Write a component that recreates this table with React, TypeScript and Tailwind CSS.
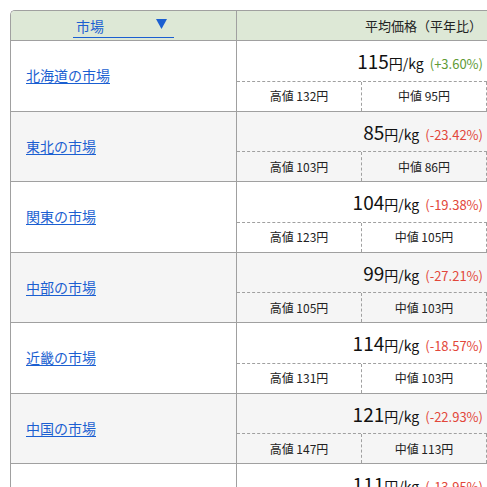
import React from "react";

type Row = { name: string; price: number; diff: string; high: number; mid: number };

const rows: Row[] = [
  { name: "北海道の市場", price: 115, diff: "+3.60%", high: 132, mid: 95 },
  { name: "東北の市場", price: 85, diff: "-23.42%", high: 103, mid: 86 },
  { name: "関東の市場", price: 104, diff: "-19.38%", high: 123, mid: 105 },
  { name: "中部の市場", price: 99, diff: "-27.21%", high: 105, mid: 103 },
  { name: "近畿の市場", price: 114, diff: "-18.57%", high: 131, mid: 103 },
  { name: "中国の市場", price: 121, diff: "-22.93%", high: 147, mid: 113 },
  { name: "四国の市場", price: 111, diff: "-13.95%", high: 128, mid: 104 },
];

export default function App() {
  return (
    <div
      className="w-[487px] h-[487px] overflow-hidden bg-white pt-[10px] pl-[10px] text-[#222]"
      style={{ fontFamily: '"Noto Sans CJK JP", "Noto Sans", sans-serif' }}
    >
      <div className="w-[600px] border-l border-t border-[#a0a0a0] rounded-tl-[5px] overflow-hidden">
        {/* header */}
        <div className="flex h-[30px] bg-[#dde8d6] border-b border-[#a0a0a0]">
          <div className="w-[226px] shrink-0 border-r border-[#a0a0a0] flex justify-center">
            <div className="w-[101px] h-[27px] border-b border-[#1b5fd1] flex items-end justify-between pl-[3px] pr-[7px] pb-[1px]">
              <span className="text-[14px] leading-[20px] text-[#1b5fd1]">市場</span>
              <svg width="11" height="10" viewBox="0 0 11 10" className="mb-[7px]">
                <polygon points="0,0 11,0 5.5,10" fill="#1b5fd1" />
              </svg>
            </div>
          </div>
          <div className="flex-1 flex items-center justify-center text-[13px]">平均価格（平年比）</div>
        </div>
        {rows.map((r, i) => (
          <div
            key={r.name}
            className={`flex h-[70.5px] border-b border-[#a0a0a0] ${i % 2 === 1 ? "bg-[#f5f5f5]" : "bg-white"}`}
          >
            <div className="w-[226px] shrink-0 border-r border-[#a0a0a0] flex items-center pl-[15px]">
              <a href="#" className="text-[14px] text-[#1b5fd1] underline underline-offset-2">
                {r.name}
              </a>
            </div>
            <div className="flex-1">
              <div className="w-[250px] flex flex-col">
                <div className="h-[39.5px] flex items-baseline justify-end pr-[4px] pt-[9px] text-[#111]">
                  <span className="text-[19px] leading-[22px]">{r.price}</span>
                  <span className="text-[14px] leading-[22px]">円/kg</span>
                  <span
                    className={`text-[13px] leading-[22px] ml-[6px] ${r.diff.startsWith("+") ? "text-[#5e9a35]" : "text-[#e2473a]"}`}
                  >
                    ({r.diff})
                  </span>
                </div>
                <div className="h-[30px] flex border-t border-dashed border-[#a0a0a0] text-[12px]">
                  <div className="w-[124px] flex items-center justify-center">高値 {r.high}円</div>
                  <div className="flex-1 flex items-center justify-center border-l border-r border-dashed border-[#a0a0a0]">
                    中値 {r.mid}円
                  </div>
                </div>
              </div>
            </div>
          </div>
        ))}
      </div>
    </div>
  );
}
